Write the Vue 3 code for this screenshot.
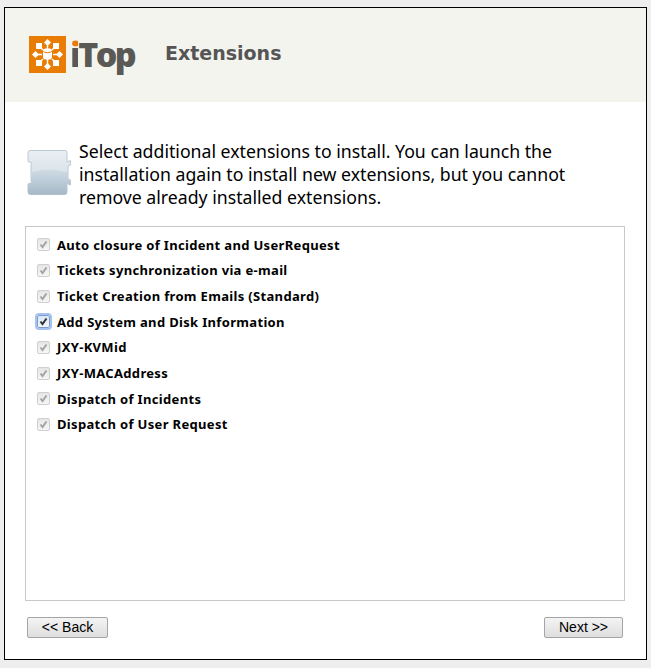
<template>
  <div class="page">
    <div class="window">
      <header class="head">
        <div class="logo">
          <svg class="mark" width="37" height="37" viewBox="0 0 37 37">
            <rect width="37" height="37" fill="#e87c05" />
            <path d="M18.500 14V8M18.500 23v6M13 18.500H8M24 18.500h5M14 14l-4-4M23 14l4-4M14 23l-4 4M23 23l4 4" fill="none" stroke="#fff" stroke-width="1.400" />
            <g fill="#fff">
              <rect x="7" y="7" width="6" height="6" />
              <rect x="24" y="7" width="6" height="6" />
              <rect x="7" y="24" width="6" height="6" />
              <rect x="24" y="24" width="6" height="6" />
              <path d="M18.500 3l3.500 3.500-3.500 3.500-3.500-3.500z" />
              <path d="M18.500 27l3.500 3.500-3.500 3.500-3.500-3.500z" />
              <path d="M6.500 15l3.500 3.500-3.500 3.500-3.500-3.500z" />
              <path d="M30.500 15l3.500 3.500-3.500 3.500-3.500-3.500z" />
              <path d="M14 14.500c0-3 9-3 9 0v7c0 3-9 3-9 0z" />
            </g>
            <path d="M14 15c1 2.200 8 2.200 9 0" fill="none" stroke="#e87c05" stroke-width="1" />
          </svg>
          <span class="brand"><span class="dot">i</span>Top</span>
        </div>
        <h1 class="title">Extensions</h1>
      </header>

      <section class="intro">
        <svg class="puzzle" width="44" height="46" viewBox="0 0 44 46">
          <defs>
            <linearGradient id="pz" x1="0" y1="0" x2="0" y2="1">
              <stop offset="0" stop-color="#eaf0f4" />
              <stop offset="0.5" stop-color="#d9e3ea" />
              <stop offset="1" stop-color="#c3d1dc" />
            </linearGradient>
            <linearGradient id="pzl" x1="0" y1="0" x2="0" y2="1">
              <stop offset="0" stop-color="#d0dce5" />
              <stop offset="1" stop-color="#a3b7c7" />
            </linearGradient>
            <clipPath id="pzc">
              <path d="M3 .5H38q2 0 2 2V12l3.500-1.500V15l-2.500 1V29l2.500 1v5l-3.500-1.500V42q0 2.500-2.500 2.500H3.500Q1 44.500 1 42V34l4-1.500-1-2V15l1-2-4-1.500V3Q1 .5 3 .5z" />
            </clipPath>
          </defs>
          <path d="M3 .5H38q2 0 2 2V12l3.500-1.500V15l-2.500 1V29l2.500 1v5l-3.500-1.500V42q0 2.500-2.500 2.500H3.500Q1 44.500 1 42V34l4-1.500-1-2V15l1-2-4-1.500V3Q1 .5 3 .5z" fill="url(#pz)" stroke="#bcc8d1" stroke-width="1" />
          <path d="M0 24Q22 15 44 24V46H0z" fill="url(#pzl)" clip-path="url(#pzc)" />
        </svg>
        <p class="lead">Select additional extensions to install. You can launch the installation again to install new extensions, but you cannot remove already installed extensions.</p>
      </section>

      <section class="list">
        <label v-for="item in items" :key="item.label" class="row">
          <input type="checkbox" class="box" :checked="true" :disabled="item.locked" />
          <span class="name">{{ item.label }}</span>
        </label>
      </section>

      <footer class="actions">
        <button type="button" class="btn back">&lt;&lt; Back</button>
        <button type="button" class="btn next">Next &gt;&gt;</button>
      </footer>
    </div>
  </div>
</template>

<script setup>
const items = [
  { label: 'Auto closure of Incident and UserRequest', locked: true },
  { label: 'Tickets synchronization via e-mail', locked: true },
  { label: 'Ticket Creation from Emails (Standard)', locked: true },
  { label: 'Add System and Disk Information', locked: false },
  { label: 'JXY-KVMid', locked: true },
  { label: 'JXY-MACAddress', locked: true },
  { label: 'Dispatch of Incidents', locked: true },
  { label: 'Dispatch of User Request', locked: true }
]
</script>

<style>
html, body { margin: 0; background: #eeeeee; }
</style>

<style scoped>
.page {
  width: 651px;
  height: 668px;
  box-sizing: border-box;
  padding: 7px 4px 8px 4px;
  background: #eeeeee;
  overflow: hidden;
}
.window {
  height: 100%;
  box-sizing: border-box;
  border: 1px solid #000;
  background: #fff;
  display: flex;
  flex-direction: column;
}
.head {
  height: 94px;
  flex: none;
  background: #f4f4ef;
  display: flex;
  align-items: flex-start;
}
.logo {
  display: flex;
  align-items: flex-start;
  margin: 28px 0 0 24px;
  width: 136px;
}
.mark { flex: none; }
.brand {
  margin-left: 4px;
  font: 800 34px/36px "Open Sans", sans-serif;
  letter-spacing: -2.700px;
  color: #5a5955;
}
.dot {
  background: linear-gradient(#e87c05 0 36%, #5a5955 36%);
  -webkit-background-clip: text;
  background-clip: text;
  color: transparent;
}
.title {
  margin: 31px 0 0 0;
  font: 700 19px/28px "DejaVu Sans", sans-serif;
  color: #555555;
}
.intro {
  display: flex;
  align-items: flex-start;
  margin: 37px 0 0 22px;
  height: 77px;
}
.puzzle { flex: none; margin-top: 11px; }
.lead {
  margin: 1px 0 0 8px;
  width: 495px;
  font: 400 17.7px/23px "Noto Sans", sans-serif;
  color: #000;
}
.list {
  margin: 10px 21px 0 20px;
  height: 375px;
  flex: none;
  box-sizing: border-box;
  border: 1px solid #c8c8c8;
  padding: 5px 0 0 11px;
  display: flex;
  flex-direction: column;
}
.row {
  height: 25.65px;
  display: flex;
  align-items: center;
  flex: none;
}
.box {
  appearance: none;
  -webkit-appearance: none;
  width: 13px;
  height: 13px;
  margin: 0 7px 0 0;
  flex: none;
  box-sizing: border-box;
  border: 1px solid #cfcfcf;
  border-radius: 2px;
  background:
    url("data:image/svg+xml,%3Csvg xmlns='http://www.w3.org/2000/svg' width='11' height='11'%3E%3Cpath d='M2.500 5.500l2 2.500 4-5.500' fill='none' stroke='%23a4a4a4' stroke-width='2'/%3E%3C/svg%3E") center no-repeat,
    linear-gradient(#e6e6e6, #f6f6f6);
}
.box:not(:disabled) {
  border-color: #7f9cc8;
  outline: 2px solid #a5c3f0;
  background:
    url("data:image/svg+xml,%3Csvg xmlns='http://www.w3.org/2000/svg' width='11' height='11'%3E%3Cpath d='M2.500 5.500l2 2.500 4-5.500' fill='none' stroke='%23333' stroke-width='2'/%3E%3C/svg%3E") center no-repeat,
    linear-gradient(#d8e6f7, #f2f7fd);
}
.name {
  font: 700 13px/18px "Noto Sans", sans-serif;
  letter-spacing: 0.33px;
  color: #000;
}
.actions {
  display: flex;
  justify-content: space-between;
  margin: 16px 23px 0 22px;
}
.btn {
  height: 21px;
  box-sizing: border-box;
  padding: 0;
  border: 1px solid #a5a5a5;
  border-radius: 2px;
  background: linear-gradient(#f4f4f4, #dedede);
  font: 400 14px/19px "Liberation Sans", sans-serif;
  color: #000;
}
.back { width: 81px; }
.next { width: 79px; }
</style>
